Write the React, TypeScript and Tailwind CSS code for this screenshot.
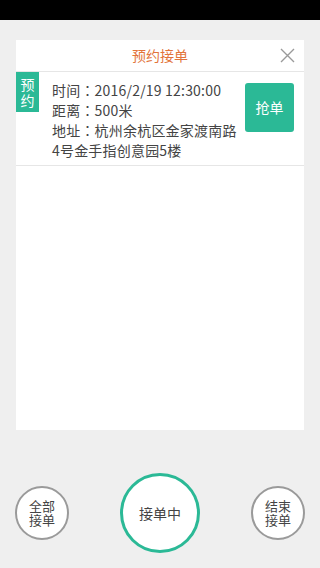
import React from 'react';

const font = { fontFamily: '"Noto Sans CJK SC", "Liberation Sans", sans-serif' };
// TC variant draws the full-width colon centred, as the screenshot does
const colonFont = { fontFamily: '"Noto Sans CJK TC", sans-serif' };

interface Order {
  time: string;
  distance: string;
  address: string;
}

const orders: Order[] = [
  {
    time: '2016/2/19 12:30:00',
    distance: '500米',
    address: '杭州余杭区金家渡南路4号金手指创意园5楼'
  }
];

const Field: React.FC<{ label: string; value: string }> = ({ label, value }) => (
  <div>
    {label}
    <span style={colonFont}>：</span>
    {value}
  </div>
);

const OrderRow: React.FC<{ order: Order }> = ({ order }) => (
  <div className="relative flex border-b border-[#e6e6e6] pl-[36px] pr-[10px] pt-[8px] pb-[5px]">
    {/* tag on the left edge */}
    <div className="absolute left-0 top-0 w-[23px] h-[40px] bg-[#2bb996] text-white text-[14px] leading-[16px] flex flex-col items-center justify-center">
      <span>预</span>
      <span>约</span>
    </div>
    <div className="flex-1 text-[14px] leading-[20px] text-[#444] pr-[8px] tracking-[0.2px]">
      <Field label="时间" value={order.time} />
      <Field label="距离" value={order.distance} />
      <Field label="地址" value={order.address} />
    </div>
    <button className="mt-[3px] w-[49px] h-[49px] shrink-0 rounded-[3px] bg-[#2bb996] text-white text-[14px]">
      抢单
    </button>
  </div>
);

const RoundButton: React.FC<{ lines: string[] }> = ({ lines }) => (
  <button className="w-[54px] h-[54px] rounded-full border-2 border-[#9a9a9a] bg-white flex flex-col items-center justify-center text-[13px] leading-[14px] text-[#444]">
    {lines.map((l) => (
      <span key={l}>{l}</span>
    ))}
  </button>
);

export default function App() {
  return (
    <div className="w-[320px] h-[568px] bg-[#efefef] flex flex-col" style={font}>
      {/* status bar */}
      <div className="h-[20px] bg-black shrink-0" />

      {/* card */}
      <div className="mx-[16px] mt-[20px] h-[390px] bg-white flex flex-col">
        <div className="relative h-[32px] flex items-center justify-center border-b border-[#e6e6e6]">
          <span className="text-[14px] text-[#e2743a]">预约接单</span>
          <svg className="absolute right-[9px] top-[8px] w-[15px] h-[15px]" viewBox="0 0 15 15" fill="none" stroke="#9a9a9a" strokeWidth="1.4">
            <path d="M1 1L14 14M14 1L1 14" />
          </svg>
        </div>
        {orders.map((o, i) => (
          <OrderRow key={i} order={o} />
        ))}
      </div>

      {/* bottom controls */}
      <div className="flex-1 flex items-center justify-between px-[15px] pt-[28px]">
        <RoundButton lines={['全部', '接单']} />
        <button className="w-[80px] h-[80px] rounded-full border-[3px] border-[#2bb996] bg-white text-[14px] text-[#444]">
          接单中
        </button>
        <RoundButton lines={['结束', '接单']} />
      </div>
    </div>
  );
}
